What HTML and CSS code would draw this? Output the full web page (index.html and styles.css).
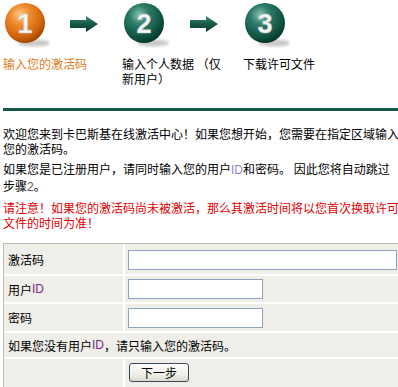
FILE: index.html
```html
<!DOCTYPE html>
<html lang="zh-CN">
<head>
<meta charset="utf-8">
<title>卡巴斯基在线激活中心</title>
<link rel="stylesheet" href="styles.css">
</head>
<body>
<div class="page">
  <div class="steps">
    <div class="step step1">
      <div class="step-top">
        <svg class="ball" width="48" height="48" viewBox="0 0 48 48">
          <defs>
            <radialGradient id="g1" cx="38%" cy="30%" r="70%">
              <stop offset="0" stop-color="#ffc995"/>
              <stop offset="0.35" stop-color="#f08b2c"/>
              <stop offset="0.8" stop-color="#cf620c"/>
              <stop offset="1" stop-color="#a84a04"/>
            </radialGradient>
            <filter id="blur1"><feGaussianBlur stdDeviation="1.6"/></filter>
          </defs>
          <ellipse cx="31" cy="41" rx="16" ry="3.5" fill="#9a9a9a" opacity="0.55" filter="url(#blur1)"/>
          <circle cx="22" cy="21" r="20" fill="url(#g1)"/>
          <text x="22" y="31" class="num">1</text>
        </svg>
        <svg class="arrow a1" width="28" height="16" viewBox="0 0 28 16">
          <defs>
            <linearGradient id="ga1" x1="0" y1="0" x2="0" y2="1">
              <stop offset="0" stop-color="#4c8a78"/>
              <stop offset="0.45" stop-color="#175c4a"/>
              <stop offset="1" stop-color="#0a3a2e"/>
            </linearGradient>
          </defs>
          <path d="M0 4 H16 V0 L28 8 L16 16 V12 H0 Z" fill="url(#ga1)"/>
        </svg>
      </div>
      <div class="label active">输入您的激活码</div>
    </div>
    <div class="step step2">
      <div class="step-top">
        <svg class="ball" width="48" height="48" viewBox="0 0 48 48">
          <defs>
            <radialGradient id="g2" cx="38%" cy="30%" r="70%">
              <stop offset="0" stop-color="#8cc4b4"/>
              <stop offset="0.35" stop-color="#2d7c68"/>
              <stop offset="0.8" stop-color="#0f5242"/>
              <stop offset="1" stop-color="#083a2e"/>
            </radialGradient>
            <filter id="blur2"><feGaussianBlur stdDeviation="1.6"/></filter>
          </defs>
          <ellipse cx="31" cy="41" rx="16" ry="3.5" fill="#9a9a9a" opacity="0.55" filter="url(#blur2)"/>
          <circle cx="22" cy="21" r="20" fill="url(#g2)"/>
          <text x="22" y="31" class="num">2</text>
        </svg>
        <svg class="arrow a2" width="28" height="16" viewBox="0 0 28 16">
          <path d="M0 4 H16 V0 L28 8 L16 16 V12 H0 Z" fill="url(#ga1)"/>
        </svg>
      </div>
      <div class="label narrow">输入个人数据 （仅新用户）</div>
    </div>
    <div class="step step3">
      <div class="step-top">
        <svg class="ball" width="48" height="48" viewBox="0 0 48 48">
          <defs>
            <filter id="blur3"><feGaussianBlur stdDeviation="1.6"/></filter>
          </defs>
          <ellipse cx="31" cy="41" rx="16" ry="3.5" fill="#9a9a9a" opacity="0.55" filter="url(#blur3)"/>
          <circle cx="22" cy="21" r="20" fill="url(#g2)"/>
          <text x="22" y="31" class="num">3</text>
        </svg>
      </div>
      <div class="label">下载许可文件</div>
    </div>
  </div>

  <div class="rule"></div>

  <p class="para">欢迎您来到卡巴斯基在线激活中心！如果您想开始，您需要在指定区域输入您的激活码。</p>
  <p class="para">如果您是已注册用户，请同时输入您的用户<span class="id">ID</span>和密码。 因此您将自动跳过步骤<span class="digit">2</span>。</p>
  <p class="para warn">请注意！如果您的激活码尚未被激活，那么其激活时间将以您首次换取许可文件的时间为准！</p>

  <div class="form-box">
    <div class="form">
      <div class="cell lbl r1">激活码</div>
      <div class="cell r1"><input class="field wide" type="text"></div>
      <div class="cell lbl r2">用户<span class="fid">ID</span></div>
      <div class="cell r2"><input class="field short" type="text"></div>
      <div class="cell lbl r3">密码</div>
      <div class="cell r3"><input class="field short" type="password"></div>
      <div class="cell lbl span r4">如果您没有用户<span class="fid">ID</span>，请只输入您的激活码。</div>
      <div class="cell r5"></div>
      <div class="cell r5 btn-cell"><button class="btn" type="button">下一步</button></div>
    </div>
  </div>
</div>
</body>
</html>
```

FILE: styles.css
```css
html, body {
  margin: 0;
  padding: 0;
  overflow: hidden;
  background: #ffffff;
}

body {
  font-family: "Noto Sans CJK SC", "Liberation Sans", sans-serif;
  font-size: 12px;
  line-height: 15px;
  color: #000000;
}

.page {
  width: 397px;
  padding-left: 3px;
}

.steps {
  display: flex;
  padding-top: 2px;
}

.step1 { width: 119px; }
.step2 { width: 121px; }
.step3 { flex: 1; }

.step-top {
  display: flex;
  align-items: flex-start;
  height: 48px;
}

.ball { display: block; }

.num {
  font-family: "Liberation Sans", Arial, sans-serif;
  font-weight: bold;
  font-size: 27px;
  text-anchor: middle;
  fill: #f6f6f6;
  stroke: #c9c9c9;
  stroke-width: 0.6px;
}

.arrow {
  display: block;
  margin-top: 14px;
}
.a1 { margin-left: 19px; }
.a2 { margin-left: 20px; }

.label {
  margin-top: 6px;
  color: #000000;
}
.label.active { color: #dd7d1c; }
.label.narrow { width: 108px; }

.rule {
  height: 3px;
  background: #16574a;
  margin-top: 22px;
}

.para {
  margin: 0 0 5px 0;
}
.para:first-of-type { margin-top: 15px; }

.id {
  font-family: "Liberation Sans", sans-serif;
  color: #8d84cf;
}
.digit {
  font-family: "Liberation Sans", sans-serif;
  color: #555566;
}

.warn { color: #e00000; }

.form-box {
  margin-top: 13px;
  margin-right: -3px;
  border-top: 1px solid #bdbdb5;
  border-left: 1px solid #bdbdb5;
}

.form {
  display: grid;
  grid-template-columns: 119px 1fr;
  grid-template-rows: 30px 26px 27px 24px 28px;
  gap: 2px;
  background: #ffffff;
}

.cell {
  background: #efeee8;
  display: flex;
  align-items: center;
}

.lbl { padding-left: 4px; }
.span { grid-column: 1 / span 2; }

.fid {
  font-family: "Liberation Sans", sans-serif;
  color: #7a2a88;
}

.field {
  margin: 0 0 0 3px;
  height: 20px;
  box-sizing: border-box;
  border: 1px solid #8ea3bd;
  background: #ffffff;
  padding: 0 2px;
  font: inherit;
}
.field.wide { width: 269px; margin-top: 2px; }
.field.short { width: 135px; }

.btn-cell { align-items: flex-start; }

.btn {
  margin: 4px 0 0 4px;
  width: 60px;
  height: 19px;
  box-sizing: border-box;
  border: 1px solid #3c4a58;
  border-radius: 3px;
  background: linear-gradient(#ffffff, #f0efe8 60%, #dcdad0);
  font: inherit;
  line-height: 15px;
  padding: 0;
  color: #000000;
}
```
